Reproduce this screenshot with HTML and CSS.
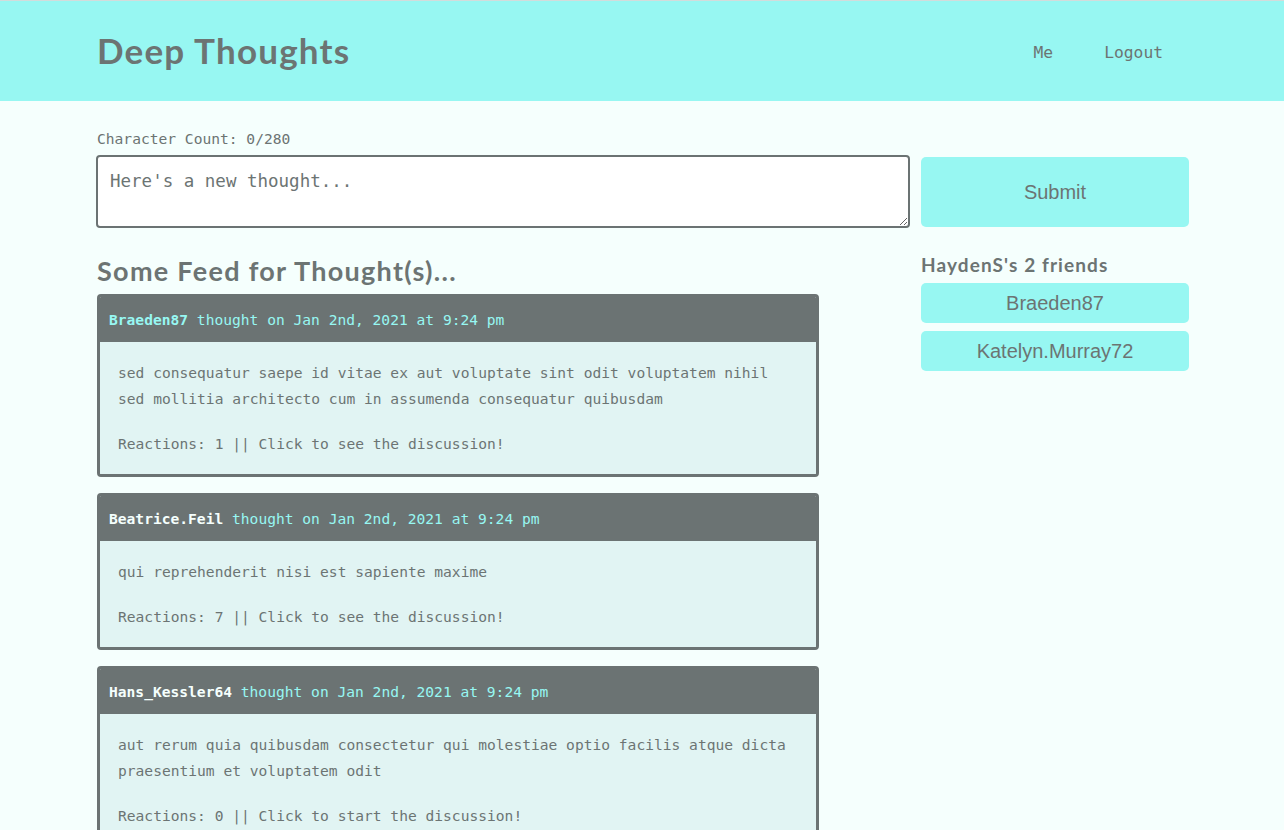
FILE: index.html
```html
<!DOCTYPE html>
<html lang="en">
<head>
<meta charset="utf-8">
<title>Deep Thoughts</title>
<link rel="stylesheet" href="styles.css">
</head>
<body>
<header class="site-header">
  <div class="container header-inner">
    <h1 class="brand">Deep Thoughts</h1>
    <nav class="nav">
      <a class="nav-link" href="#">Me</a>
      <a class="nav-link" href="#">Logout</a>
    </nav>
  </div>
</header>
<main class="container main">
  <div class="count">Character Count: 0/280</div>
  <form class="thought-form">
    <textarea class="thought-input" placeholder="Here's a new thought..."></textarea>
    <button class="btn submit" type="button">Submit</button>
  </form>
  <div class="columns">
    <section class="feed">
      <h2 class="feed-title">Some Feed for Thought(s)...</h2>
      <article class="card">
        <div class="card-header"><span class="user user-friend">Braeden87</span> thought on Jan 2nd, 2021 at 9:24 pm</div>
        <div class="card-body">
          <p class="text">sed consequatur saepe id vitae ex aut voluptate sint odit voluptatem nihil sed mollitia architecto cum in assumenda consequatur quibusdam</p>
          <p class="reactions">Reactions: 1 || Click to see the discussion!</p>
        </div>
      </article>
      <article class="card">
        <div class="card-header"><span class="user">Beatrice.Feil</span> thought on Jan 2nd, 2021 at 9:24 pm</div>
        <div class="card-body">
          <p class="text">qui reprehenderit nisi est sapiente maxime</p>
          <p class="reactions">Reactions: 7 || Click to see the discussion!</p>
        </div>
      </article>
      <article class="card">
        <div class="card-header"><span class="user">Hans_Kessler64</span> thought on Jan 2nd, 2021 at 9:24 pm</div>
        <div class="card-body">
          <p class="text">aut rerum quia quibusdam consectetur qui molestiae optio facilis atque dicta praesentium et voluptatem odit</p>
          <p class="reactions">Reactions: 0 || Click to start the discussion!</p>
        </div>
      </article>
    </section>
    <aside class="friends">
      <h5 class="friends-title">HaydenS's 2 friends</h5>
      <button class="btn friend" type="button">Braeden87</button>
      <button class="btn friend" type="button">Katelyn.Murray72</button>
    </aside>
  </div>
</main>
</body>
</html>
```
FILE: styles.css
```css
* { box-sizing: border-box; }
html, body { margin: 0; padding: 0; }
body {
  background: #f5fffd;
  color: #6c7473;
  font-family: "DejaVu Sans Mono", monospace;
  border-top: 1px solid #d3dcdb;
}
.container {
  width: 1092px;
  margin: 0 0 0 97px;
}
.site-header {
  background: #97f7f2;
  height: 100px;
}
.header-inner {
  display: flex;
  align-items: center;
  justify-content: space-between;
  height: 100%;
}
.brand {
  margin: 0;
  font-family: "Lato", sans-serif;
  font-weight: 700;
  font-size: 35px;
  letter-spacing: 1.2px;
  color: #6c7473;
  padding-bottom: 2px;
}
.nav {
  display: flex;
  gap: 51px;
  padding-right: 26px;
  padding-top: 2px;
}
.nav-link {
  color: #6c7473;
  text-decoration: none;
  font-size: 16.3px;
}
.main { padding-top: 28px; }
.count {
  font-size: 14.6px;
  line-height: 20px;
  margin-bottom: 6px;
}
.thought-form {
  display: flex;
  align-items: center;
  gap: 11px;
}
.thought-input {
  flex: 1;
  height: 73px;
  border: 2px solid #6b7373;
  border-radius: 4px;
  background: #fff;
  padding: 14px 12px;
  font-family: "DejaVu Sans Mono", monospace;
  font-size: 17.5px;
  color: #6c7473;
  margin: 0 0 0 -1px;
}
.thought-input::placeholder { color: #6c7473; opacity: 1; }
.btn {
  display: block;
  border: none;
  background: #97f7f2;
  color: #6c7473;
  font-family: "Liberation Sans", Arial, sans-serif;
  font-size: 20px;
  border-radius: 5px;
  cursor: pointer;
}
.submit {
  width: 268px;
  height: 70px;
  padding-top: 2px;
}
.columns {
  display: flex;
  justify-content: space-between;
  margin-top: 26px;
}
.feed { width: 722px; }
.feed-title {
  margin: 0 0 6px;
  font-family: "Lato", sans-serif;
  font-weight: 700;
  font-size: 27px;
  letter-spacing: 1.3px;
  line-height: 34px;
}
.card {
  border: 3px solid #6b7373;
  border-radius: 4px;
  margin-bottom: 16px;
  overflow: hidden;
}
.card-header {
  background: #6b7373;
  color: #97f7f2;
  height: 45px;
  display: flex;
  align-items: center;
  padding: 0 9px;
  font-size: 14.6px;
  white-space: pre;
}
.user { font-weight: 700; color: #f5fffd; }
.user-friend { color: #97f7f2; }
.card-body {
  background: #e1f4f3;
  padding: 18px 18px 17px;
  font-size: 14.6px;
  line-height: 26px;
}
.card-body p { margin: 0; }
.reactions { margin-top: 19px !important; }
.friends {
  width: 268px;
  margin-top: -1px;
}
.friends-title {
  margin: 0 0 6px;
  font-family: "Lato", sans-serif;
  font-weight: 700;
  font-size: 19px;
  letter-spacing: 1.1px;
  line-height: 24px;
}
.friend {
  width: 100%;
  height: 40px;
  margin-bottom: 8px;
}
```
